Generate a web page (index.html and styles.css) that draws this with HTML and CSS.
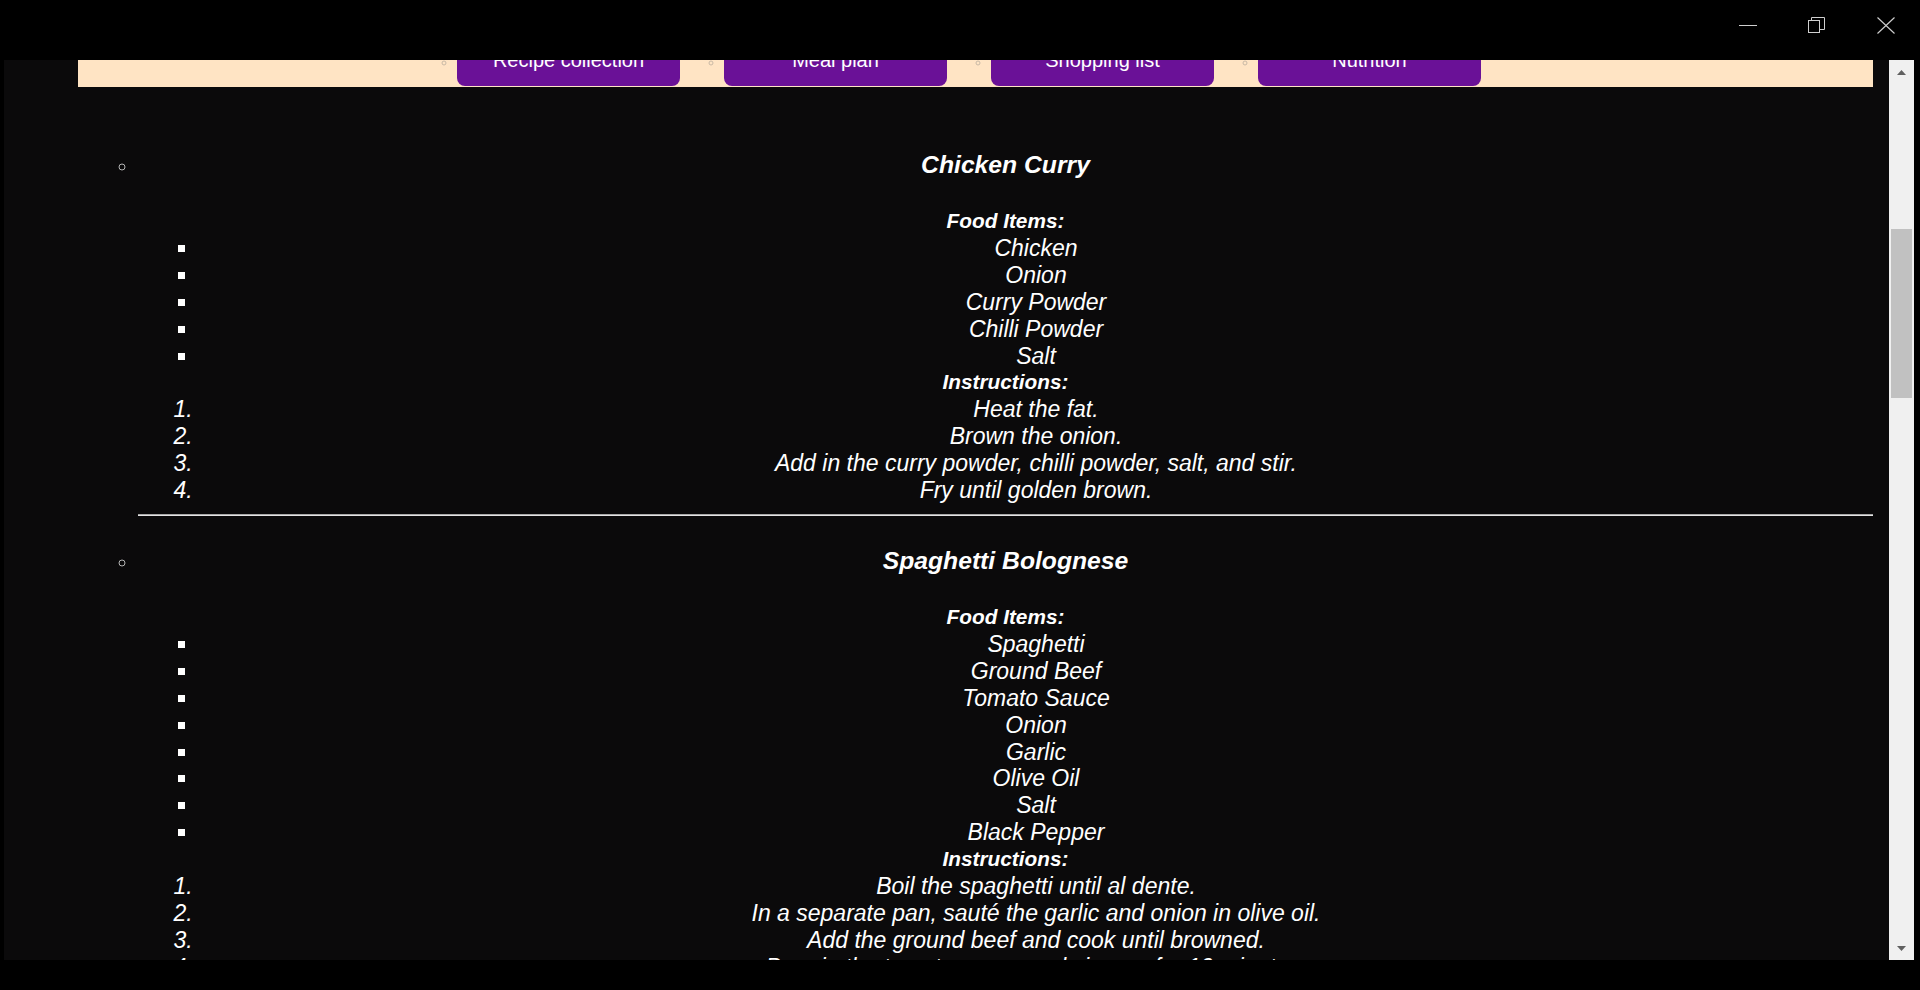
FILE: index.html
```html
<!DOCTYPE html>
<html lang="en">
<head>
<meta charset="utf-8">
<title>Recipes</title>
<link rel="stylesheet" href="styles.css">
</head>
<body>
<div class="titlebar">
  <div class="tb-btn">
    <svg width="18" height="18" viewBox="0 0 18 18"><line x1="0" y1="9.5" x2="18" y2="9.5" stroke="#cfcfcf" stroke-width="1"/></svg>
  </div>
  <div class="tb-btn">
    <svg width="18" height="16" viewBox="0 0 18 16"><rect x="0.5" y="3.5" width="11" height="12" fill="none" stroke="#cfcfcf" stroke-width="1"/><path d="M3.5 3.5 V0.5 H16.5 V12.5 H11.5" fill="none" stroke="#cfcfcf" stroke-width="1"/></svg>
  </div>
  <div class="tb-btn">
    <svg width="18" height="17" viewBox="0 0 18 17"><path d="M0.5 0.5 L17.5 16.5 M17.5 0.5 L0.5 16.5" stroke="#cfcfcf" stroke-width="1.1" fill="none"/></svg>
  </div>
</div>
<div class="frame">
  <div class="viewport">
    <div class="page">
      <nav class="nav">
        <ul class="nav-list">
          <li><a class="nav-btn" href="#">Recipe collection</a></li>
          <li><a class="nav-btn" href="#">Meal plan</a></li>
          <li><a class="nav-btn" href="#">Shopping list</a></li>
          <li><a class="nav-btn" href="#">Nutrition</a></li>
        </ul>
      </nav>
      <ul class="recipes">
        <li class="recipe">
          <h2 class="recipe-title">Chicken Curry</h2>
          <div class="label">Food Items:</div>
          <ul class="items">
            <li>Chicken</li>
            <li>Onion</li>
            <li>Curry Powder</li>
            <li>Chilli Powder</li>
            <li>Salt</li>
          </ul>
          <div class="label">Instructions:</div>
          <ol class="steps">
            <li>Heat the fat.</li>
            <li>Brown the onion.</li>
            <li>Add in the curry powder, chilli powder, salt, and stir.</li>
            <li>Fry until golden brown.</li>
          </ol>
          <hr class="divider">
        </li>
        <li class="recipe">
          <h2 class="recipe-title">Spaghetti Bolognese</h2>
          <div class="label">Food Items:</div>
          <ul class="items">
            <li>Spaghetti</li>
            <li>Ground Beef</li>
            <li>Tomato Sauce</li>
            <li>Onion</li>
            <li>Garlic</li>
            <li>Olive Oil</li>
            <li>Salt</li>
            <li>Black Pepper</li>
          </ul>
          <div class="label">Instructions:</div>
          <ol class="steps">
            <li>Boil the spaghetti until al dente.</li>
            <li>In a separate pan, sauté the garlic and onion in olive oil.</li>
            <li>Add the ground beef and cook until browned.</li>
            <li>Pour in the tomato sauce and simmer for 10 minutes.</li>
            <li>Season with salt and black pepper.</li>
          </ol>
          <hr class="divider">
        </li>
      </ul>
    </div>
  </div>
  <div class="scrollbar">
    <div class="sb-arrow">
      <svg width="9" height="5" viewBox="0 0 9 5"><path d="M0 5 L4.5 0 L9 5 Z" fill="#606060"/></svg>
    </div>
    <div class="sb-track"><div class="sb-thumb"></div></div>
    <div class="sb-arrow">
      <svg width="9" height="5" viewBox="0 0 9 5"><path d="M0 0 L4.5 5 L9 0 Z" fill="#606060"/></svg>
    </div>
  </div>
</div>
<div class="bottom"></div>
</body>
</html>
```

FILE: styles.css
```css
* { box-sizing: border-box; }
html, body { margin: 0; padding: 0; background: #000; }
body {
  width: 1920px;
  height: 990px;
  overflow: hidden;
  font-family: "Liberation Sans", Arial, sans-serif;
}

.titlebar {
  height: 60px;
  background: #000;
  display: flex;
  justify-content: flex-end;
  align-items: flex-start;
}
.tb-btn {
  width: 69px;
  height: 50px;
  display: flex;
  align-items: center;
  justify-content: center;
}
.tb-btn svg { display: block; }

.frame {
  height: 900px;
  display: flex;
  padding-left: 4px;
  padding-right: 6px;
  background: #000;
}
.viewport {
  flex: 1;
  background: #0b0a0b;
  overflow: hidden;
}
.page {
  margin-top: -40px;
  padding: 0 16px 0 74px;
}

.nav { background: #ffe4c4; }
.nav-list {
  margin: 0;
  padding: 15px 0 1px 379px;
  display: flex;
  gap: 44px;
  list-style: circle;
}
.nav-list li { font-size: 14px; }
.nav-list li::marker { color: #c9b9a6; }
.nav-btn {
  display: block;
  width: 223px;
  padding: 14px 0;
  background: #6a1197;
  color: #fff;
  font-size: 20px;
  line-height: 23px;
  text-align: center;
  text-decoration: none;
  border-radius: 8px;
}

.recipes {
  margin: 0;
  padding: 33px 0 0 60px;
  list-style: circle;
  color: #fff;
}
.recipe { font-size: 20px; }
.recipe::marker { color: #b5b5b5; }
.recipe-title {
  margin: 31px 0 29px;
  font-size: 24.7px;
  line-height: 28px;
  font-weight: bold;
  font-style: italic;
  text-align: center;
}
.label {
  font-size: 20.8px;
  line-height: 26.9px;
  font-weight: bold;
  font-style: italic;
  text-align: center;
}
.items, .steps {
  margin: 0;
  padding-left: 61px;
  font-size: 23px;
  line-height: 26.9px;
  font-style: italic;
  text-align: center;
}
.items { list-style: square; }
.steps { list-style: decimal; }
.divider {
  margin: 10px 0 0;
  height: 0;
  border: 0;
  border-top: 1px solid #a8a8a8;
  border-bottom: 1px solid #e4e4e4;
}

.scrollbar {
  width: 25px;
  background: #f0f0f0;
  display: flex;
  flex-direction: column;
}
.sb-arrow {
  height: 24px;
  display: flex;
  align-items: center;
  justify-content: center;
}
.sb-track { flex: 1; padding: 145px 2px 0; }
.sb-thumb { height: 169px; background: #c1c1c1; }

.bottom { height: 30px; background: #000; }
```
